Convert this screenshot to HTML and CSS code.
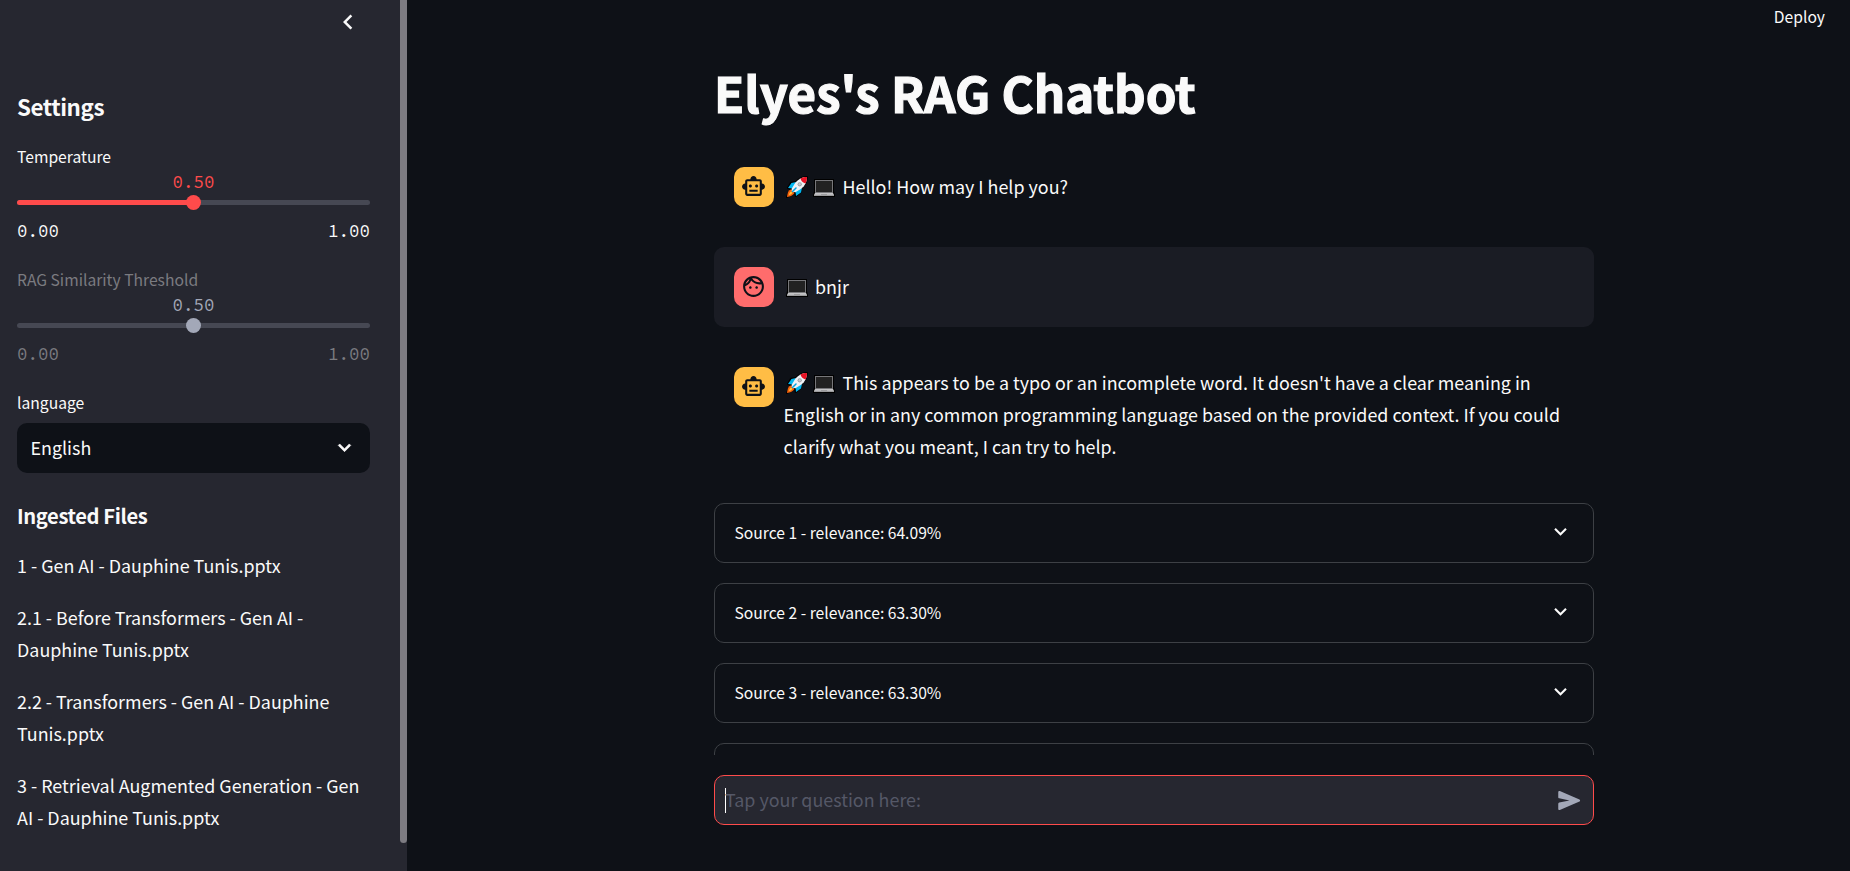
FILE: index.html
```html
<!DOCTYPE html>
<html lang="en">
<head>
<meta charset="utf-8">
<title>Elyes's RAG Chatbot</title>
<link rel="stylesheet" href="styles.css">
</head>
<body>
<svg class="defs" width="0" height="0">
  <symbol id="bot" viewBox="0 0 24 24"><path d="M20 9V7c0-1.1-.9-2-2-2h-3c0-1.66-1.34-3-3-3S9 3.34 9 5H6c-1.1 0-2 .9-2 2v2c-1.66 0-3 1.34-3 3s1.34 3 3 3v4c0 1.1.9 2 2 2h12c1.1 0 2-.9 2-2v-4c1.66 0 3-1.34 3-3s-1.34-3-3-3zm-2 10H6V7h12v12zm-9-6c-.83 0-1.5-.67-1.5-1.5S8.17 10 9 10s1.5.67 1.5 1.5S9.83 13 9 13zm7.5-1.5c0 .83-.67 1.5-1.5 1.5s-1.5-.67-1.5-1.5.67-1.5 1.5-1.5 1.5.67 1.5 1.5zM8 15h8v2H8v-2z"/></symbol>
  <symbol id="face" viewBox="0 0 24 24"><path d="M10.25 13c0 .69-.56 1.25-1.25 1.25S7.75 13.69 7.75 13s.56-1.25 1.25-1.25 1.25.56 1.25 1.25zM15 11.75c-.69 0-1.25.56-1.25 1.25s.56 1.25 1.25 1.25 1.25-.56 1.25-1.25-.56-1.25-1.25-1.25zm7 .25c0 5.52-4.48 10-10 10S2 17.52 2 12 6.48 2 12 2s10 4.48 10 10zM10.66 4.12C12.06 6.44 14.6 8 17.5 8c.46 0 .91-.05 1.34-.12C17.44 5.56 14.9 4 12 4c-.46 0-.91.05-1.34.12zM4.42 9.47c1.71-.97 3.03-2.55 3.66-4.44C6.37 6 5.05 7.58 4.42 9.47zM20 12c0-.78-.12-1.53-.33-2.24-.7.15-1.42.24-2.17.24-3.13 0-5.92-1.44-7.76-3.69C8.69 8.87 6.6 10.88 4 11.86c.01.04 0 .09 0 .14 0 4.41 3.59 8 8 8s8-3.59 8-8z"/></symbol>
  <symbol id="down" viewBox="0 0 24 24"><path d="M16.59 8.59L12 13.17 7.41 8.59 6 10l6 6 6-6z"/></symbol>
  <symbol id="rocket" viewBox="0 0 22 22">
    <g stroke="#000" stroke-width="2" stroke-linejoin="round"><path d="M21 1c-5 0-8 1.500-11 5l-5 .8-3 5.200 3 .5-4 8.500 8-4.500.8 3.500 4.700-4 .8-4.500C19 9 21 6 21 1z"/></g>
    <path fill="#f7630c" d="M4.500 13.500C2 14.500 1.500 17.500 1 21c3.500-.5 6-1.500 7.500-4z"/>
    <path fill="#ffc83d" d="M5 15.500c-1.200.8-1.800 2-2 3.500 1.500-.3 2.800-1 3.500-2.200z"/>
    <path fill="#00b7f1" d="M10 6 5.500 7 2 12l5 .5zM16 12l-1 4.500L10 20l-.500-5z"/>
    <path fill="#eef1f5" d="M21 1c-5 0-8.500 2-11.500 5.500L5.500 13l3.500 3.500 6.500-4C19 9.500 21 6 21 1z"/>
    <path fill="#e81224" d="M21 1c-2.500 0-4.500.4-6.500 1.500.5 2.500 2.500 4.500 5 5C20.600 5.500 21 3.500 21 1z"/>
    <circle cx="13.700" cy="8.300" r="2.100" fill="#9a9da3"/><circle cx="13.700" cy="8.300" r="1.200" fill="#c5c8cd"/>
    <path stroke="#00a4e4" stroke-width="1.500" stroke-linecap="round" d="m6.500 15.500 3.500-3.500"/>
  </symbol>
  <symbol id="laptop" viewBox="0 0 22 18">
    <path fill="#000" d="M1 0h20v12l1 4v2H0v-2l1-4z"/>
    <path fill="#77777a" d="M2 1h18v13H2z"/><path fill="#222" d="M3 2h16v11H3z"/>
    <path fill="#c4c4c6" d="M2 14h18l1 2H1z"/><path fill="#9c9c9e" d="M1 15.700h20V17H1zM8 15h6v1H8z"/>
  </symbol>
</svg>
<div class="app">
  <aside class="sidebar">
    <div class="sidebar-head">
      <svg class="collapse" viewBox="0 0 24 24"><path d="M15.410 7.410 14 6l-6 6 6 6 1.410-1.410L10.830 12z"/></svg>
    </div>
    <h2 class="settings">Settings</h2>
    <div class="slider">
      <div class="label">Temperature</div>
      <div class="value">0.50</div>
      <div class="track"><div class="fill"></div><div class="thumb"></div></div>
      <div class="range"><span>0.00</span><span>1.00</span></div>
    </div>
    <div class="slider disabled">
      <div class="label">RAG Similarity Threshold</div>
      <div class="value">0.50</div>
      <div class="track"><div class="fill"></div><div class="thumb"></div></div>
      <div class="range"><span>0.00</span><span>1.00</span></div>
    </div>
    <div class="label">language</div>
    <div class="select"><span>English</span><svg class="chev bold"><use href="#down"/></svg></div>
    <h3 class="files-title">Ingested Files</h3>
    <div class="files">
      <p>1 - Gen AI - Dauphine Tunis.pptx</p>
      <p>2.1 - Before Transformers - Gen AI -<br>Dauphine Tunis.pptx</p>
      <p>2.2 - Transformers - Gen AI - Dauphine<br>Tunis.pptx</p>
      <p>3 - Retrieval Augmented Generation - Gen<br>AI - Dauphine Tunis.pptx</p>
    </div>
    <div class="scrollbar"></div>
  </aside>
  <main class="main">
    <header class="toolbar"><span class="deploy">Deploy</span></header>
    <section class="feed">
      <h1 class="title">Elyes's RAG Chatbot</h1>
      <div class="message">
        <div class="avatar assistant"><svg><use href="#bot"/></svg></div>
        <p><svg class="rocket"><use href="#rocket"/></svg><svg class="laptop"><use href="#laptop"/></svg>Hello! How may I help you?</p>
      </div>
      <div class="message user">
        <div class="avatar human"><svg><use href="#face"/></svg></div>
        <p><svg class="laptop first"><use href="#laptop"/></svg>bnjr</p>
      </div>
      <div class="message">
        <div class="avatar assistant"><svg><use href="#bot"/></svg></div>
        <p><svg class="rocket"><use href="#rocket"/></svg><svg class="laptop"><use href="#laptop"/></svg>This appears to be a typo or an incomplete word. It doesn't have a clear meaning in<br>English or in any common programming language based on the provided context. If you could<br>clarify what you meant, I can try to help.</p>
      </div>
      <div class="source"><span>Source 1 - relevance: 64.09%</span><svg class="chev"><use href="#down"/></svg></div>
      <div class="source"><span>Source 2 - relevance: 63.30%</span><svg class="chev"><use href="#down"/></svg></div>
      <div class="source"><span>Source 3 - relevance: 63.30%</span><svg class="chev"><use href="#down"/></svg></div>
      <div class="source"></div>
    </section>
    <footer class="composer">
      <div class="input"><i class="caret"></i><span class="placeholder">Tap your question here:</span>
        <svg class="send" viewBox="0 0 24 24"><path d="M3.400 20.400l17.450-7.480c.81-.35.81-1.490 0-1.840L3.400 3.600c-.66-.29-1.390.2-1.390.91L2 9.120c0 .5.37.93.87.99L12 12 2.870 13.880c-.5.07-.87.5-.87 1l.01 4.610c0 .71.73 1.200 1.390.91z"/></svg>
      </div>
    </footer>
  </main>
</div>
</body>
</html>
```
FILE: styles.css
```css
* { box-sizing: border-box; margin: 0; padding: 0; }
body {
  height: 871px;
  overflow: hidden;
  background: #0e1117;
  color: #fafafa;
  font-family: "Source Sans Pro", "Noto Sans CJK SC", sans-serif;
  font-size: 17.900px;
  line-height: 32px;
  white-space: nowrap;
}
svg { fill: currentColor; flex: none; }
.defs { position: absolute; }
.app { display: flex; height: 871px; }

.sidebar { position: relative; width: 407px; flex: none; padding: 0 37px 0 17px; background: #262730; }
.sidebar-head { display: flex; justify-content: flex-end; height: 91px; padding: 7px 7px 0 0; }
.collapse { width: 30px; height: 30px; }
.settings { height: 30px; line-height: 30px; font-size: 22.400px; font-weight: 700; letter-spacing: -.45px; margin-bottom: 23px; }
.label { height: 28px; line-height: 26px; font-size: 15.670px; }
.slider { height: 123px; }
.value { height: 20px; line-height: 20px; text-align: center; color: #ff4b4b; }
.value, .range { font-family: "Source Code Pro", "Liberation Mono", monospace; font-size: 17.500px; }
.track { position: relative; height: 5px; margin-top: 8px; border-radius: 3px; background: #464853; }
.fill { width: 50%; height: 5px; border-radius: 3px; background: #ff4b4b; }
.thumb { position: absolute; left: 169px; top: -5px; width: 15px; height: 15px; border-radius: 50%; background: #ff4b4b; }
.range { display: flex; justify-content: space-between; line-height: 26px; margin-top: 13px; }
.disabled .label, .disabled .range { color: #7b7b80; }
.disabled .value { color: #a3a8b8; }
.disabled .fill { background: none; }
.disabled .thumb { background: #a3a8b8; }
.select { display: flex; align-items: center; justify-content: space-between; height: 50px; margin-top: 5px; padding: 0 13.500px; border-radius: 10px; background: #0e1117; }
.select span { margin-bottom: 2px; }
.select .chev { margin-bottom: 1px; }
.chev { width: 25px; height: 25px; }
.bold { stroke: #fafafa; stroke-width: .6; stroke-linejoin: round; }
.files-title { height: 30px; line-height: 30px; margin-top: 28px; font-size: 20.150px; font-weight: 700; letter-spacing: -.38px; }
.files { margin-top: 18px; }
.files p { margin-bottom: 20px; }
.scrollbar { position: absolute; right: 0; top: 0; width: 7px; height: 843px; border-radius: 0 0 4px 4px; background: #7d7c82; }

.main { flex: 1; display: flex; flex-direction: column; }
.toolbar { height: 57px; flex: none; text-align: right; padding-right: 25px; }
.deploy { font-size: 15.670px; line-height: 34px; display: block; }
.feed { width: 880px; height: 698px; margin-left: 307px; overflow: hidden; flex: none; }
.title { height: 90px; line-height: 69px; font-size: 49.200px; font-weight: 700; -webkit-text-stroke: 1.200px #fafafa; }
.message { display: flex; gap: 10px; padding: 20px; border-radius: 10px; min-height: 80px; }
.message p { margin: -1px 0 1px -.4px; }
.message.user { margin: 20px 0; background: #1a1c24; align-items: center; }
.title + .message { align-items: center; }
.avatar { width: 40px; height: 40px; flex: none; border-radius: 10px; display: flex; align-items: center; justify-content: center; color: #0e1117; }
.avatar svg { width: 25px; height: 25px; margin: 0 1px 1px 0; }
.assistant { background: #ffbd45; }
.human { background: #ff6c6c; }
.rocket { width: 22px; height: 22px; margin: 0 5.500px 0 2px; vertical-align: -4px; }
.laptop { width: 22px; height: 18px; margin-right: 7.400px; vertical-align: -3px; }
.laptop.first { margin-left: 2px; }
.source { display: flex; align-items: center; justify-content: space-between; height: 60px; margin-top: 20px; padding: 0 20px 0 19.500px; border: 1px solid #3d4045; border-radius: 10px; font-size: 15.670px; }
.source .chev { margin-bottom: 3px; }
.composer { padding: 20px 0 0 307px; }
.input { display: flex; align-items: center; width: 880px; height: 50px; padding: 0 10px; border: 1px solid #ff4b4b; border-radius: 10px; background: #262730; color: #555867; }
.placeholder { margin: 0 0 2px -1px; }
.caret { width: 1px; height: 25px; background: #fff; }
.send { width: 27px; height: 27px; margin-left: auto; color: #a3a8b8; }
```
